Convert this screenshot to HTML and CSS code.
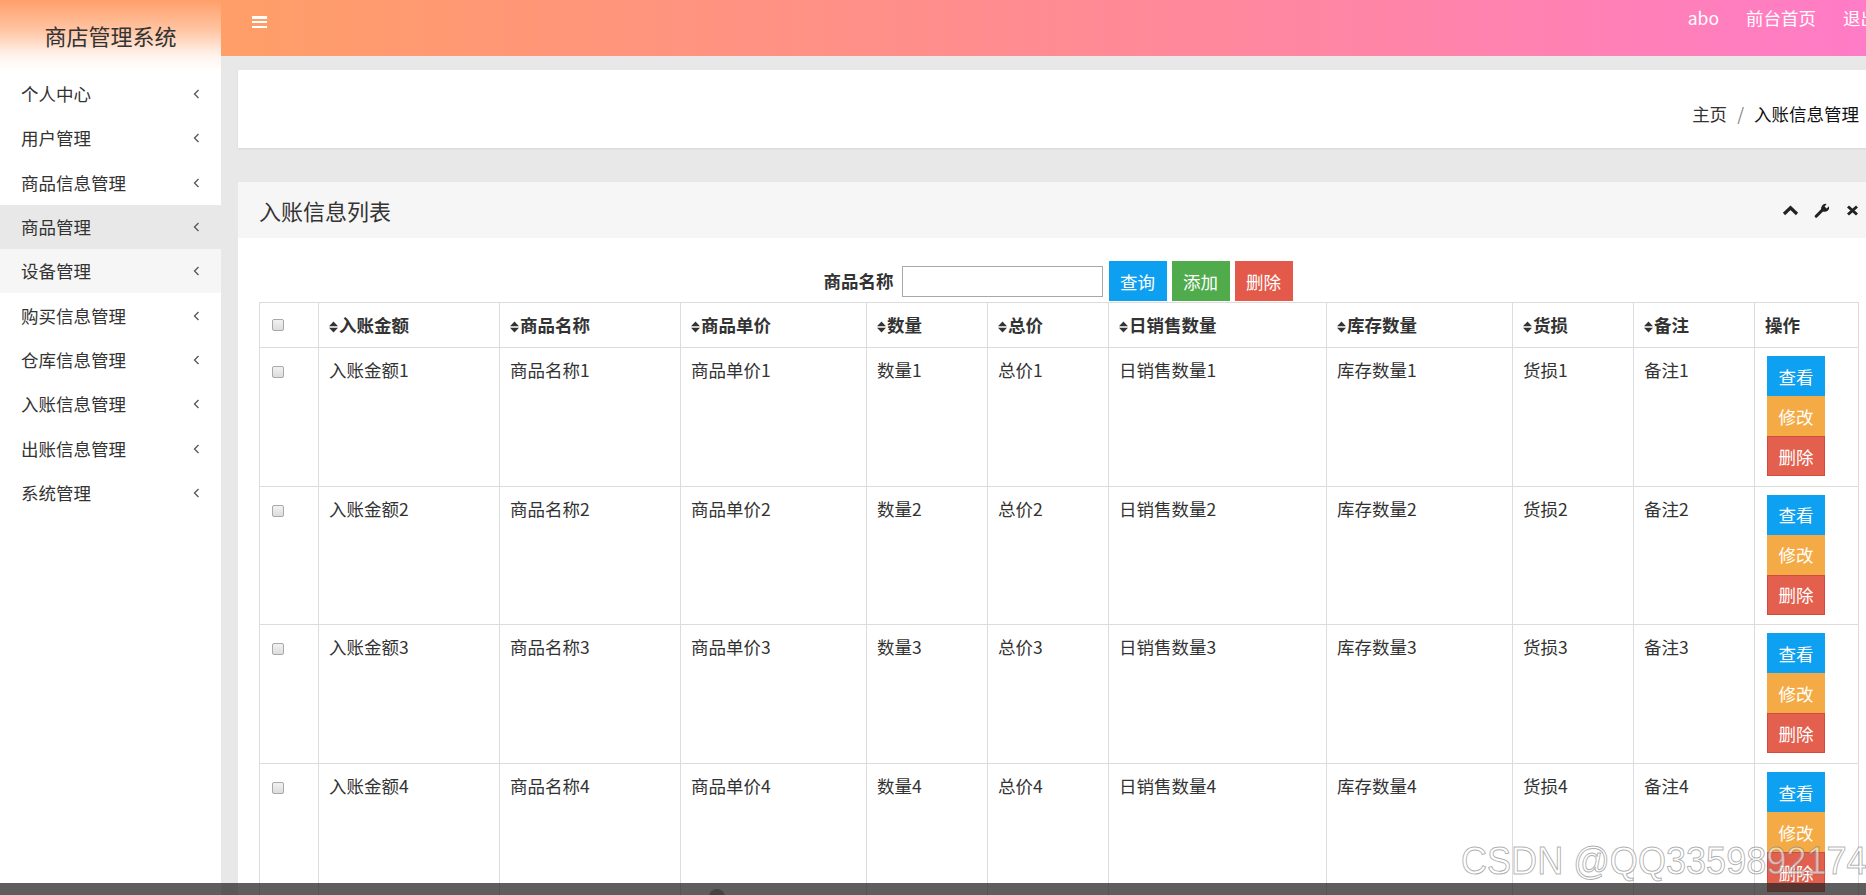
FILE: index.html
```html
<!DOCTYPE html>
<html lang="zh-CN">
<head>
<meta charset="utf-8">
<title>商店管理系统</title>
<link rel="stylesheet" href="styles.css">
</head>
<body>
<div class="app">
  <aside class="sidebar">
    <div class="logo">商店管理系统</div>
    <ul class="menu">
      <li class="menu-item"><span>个人中心</span><svg class="chev" width="7" height="10" viewBox="0 0 7 10"><polyline points="5.5,1 1.5,5 5.5,9"/></svg></li>
      <li class="menu-item"><span>用户管理</span><svg class="chev" width="7" height="10" viewBox="0 0 7 10"><polyline points="5.5,1 1.5,5 5.5,9"/></svg></li>
      <li class="menu-item"><span>商品信息管理</span><svg class="chev" width="7" height="10" viewBox="0 0 7 10"><polyline points="5.5,1 1.5,5 5.5,9"/></svg></li>
      <li class="menu-item is-active"><span>商品管理</span><svg class="chev" width="7" height="10" viewBox="0 0 7 10"><polyline points="5.5,1 1.5,5 5.5,9"/></svg></li>
      <li class="menu-item is-hover"><span>设备管理</span><svg class="chev" width="7" height="10" viewBox="0 0 7 10"><polyline points="5.5,1 1.5,5 5.5,9"/></svg></li>
      <li class="menu-item"><span>购买信息管理</span><svg class="chev" width="7" height="10" viewBox="0 0 7 10"><polyline points="5.5,1 1.5,5 5.5,9"/></svg></li>
      <li class="menu-item"><span>仓库信息管理</span><svg class="chev" width="7" height="10" viewBox="0 0 7 10"><polyline points="5.5,1 1.5,5 5.5,9"/></svg></li>
      <li class="menu-item"><span>入账信息管理</span><svg class="chev" width="7" height="10" viewBox="0 0 7 10"><polyline points="5.5,1 1.5,5 5.5,9"/></svg></li>
      <li class="menu-item"><span>出账信息管理</span><svg class="chev" width="7" height="10" viewBox="0 0 7 10"><polyline points="5.5,1 1.5,5 5.5,9"/></svg></li>
      <li class="menu-item"><span>系统管理</span><svg class="chev" width="7" height="10" viewBox="0 0 7 10"><polyline points="5.5,1 1.5,5 5.5,9"/></svg></li>
    </ul>
  </aside>

  <div class="main">
    <header class="topbar">
      <div class="hamburger"><span></span><span></span><span></span></div>
      <nav class="topnav">
        <span>abo</span>
        <span>前台首页</span>
        <span>退出</span>
      </nav>
    </header>

    <div class="content">
      <div class="crumb-card">
        <span class="crumb-home">主页</span><span class="crumb-sep">/</span><span class="crumb-cur">入账信息管理</span>
      </div>

      <section class="panel">
        <div class="panel-head">
          <h2 class="panel-title">入账信息列表</h2>
          <div class="panel-tools">
            <svg class="tool" width="17" height="11" viewBox="0 0 17 11"><polyline points="2,9 8.5,2.8 15,9" fill="none" stroke="#222" stroke-width="3.2"/></svg>
            <svg class="tool" width="17" height="15" viewBox="0 0 17 15"><path d="M2.2 13.2 L9 6.4" stroke="#222" stroke-width="3" stroke-linecap="round" fill="none"/><path d="M7.6 7.2 A4.4 4.4 0 0 1 12.6 1 L10.6 3.4 L12.6 5.4 L15 3.2 A4.4 4.4 0 0 1 9 8.4 Z" fill="#222"/></svg>
            <svg class="tool" width="13" height="11" viewBox="0 0 13 11"><path d="M2 1.5 L11 9.5 M11 1.5 L2 9.5" stroke="#222" stroke-width="3" fill="none"/></svg>
          </div>
        </div>

        <div class="panel-body">
          <div class="search">
            <label class="search-label">商品名称</label>
            <input class="search-input" type="text">
            <button class="btn btn-blue">查询</button>
            <button class="btn btn-green">添加</button>
            <button class="btn btn-red">删除</button>
          </div>

          <table class="grid">
            <colgroup>
              <col style="width:59px"><col style="width:181px"><col style="width:181px"><col style="width:186px">
              <col style="width:121px"><col style="width:121px"><col style="width:218px"><col style="width:186px">
              <col style="width:121px"><col style="width:121px"><col style="width:104px">
            </colgroup>
            <thead>
              <tr>
                <th class="cb-cell"><span class="cb"></span></th>
                <th><svg class="sort" width="9" height="12" viewBox="0 0 9 12"><path d="M4.5 0.5 L9 5.2 H0 Z M0 6.8 H9 L4.5 11.5 Z"/></svg>入账金额</th>
                <th><svg class="sort" width="9" height="12" viewBox="0 0 9 12"><path d="M4.5 0.5 L9 5.2 H0 Z M0 6.8 H9 L4.5 11.5 Z"/></svg>商品名称</th>
                <th><svg class="sort" width="9" height="12" viewBox="0 0 9 12"><path d="M4.5 0.5 L9 5.2 H0 Z M0 6.8 H9 L4.5 11.5 Z"/></svg>商品单价</th>
                <th><svg class="sort" width="9" height="12" viewBox="0 0 9 12"><path d="M4.5 0.5 L9 5.2 H0 Z M0 6.8 H9 L4.5 11.5 Z"/></svg>数量</th>
                <th><svg class="sort" width="9" height="12" viewBox="0 0 9 12"><path d="M4.5 0.5 L9 5.2 H0 Z M0 6.8 H9 L4.5 11.5 Z"/></svg>总价</th>
                <th><svg class="sort" width="9" height="12" viewBox="0 0 9 12"><path d="M4.5 0.5 L9 5.2 H0 Z M0 6.8 H9 L4.5 11.5 Z"/></svg>日销售数量</th>
                <th><svg class="sort" width="9" height="12" viewBox="0 0 9 12"><path d="M4.5 0.5 L9 5.2 H0 Z M0 6.8 H9 L4.5 11.5 Z"/></svg>库存数量</th>
                <th><svg class="sort" width="9" height="12" viewBox="0 0 9 12"><path d="M4.5 0.5 L9 5.2 H0 Z M0 6.8 H9 L4.5 11.5 Z"/></svg>货损</th>
                <th><svg class="sort" width="9" height="12" viewBox="0 0 9 12"><path d="M4.5 0.5 L9 5.2 H0 Z M0 6.8 H9 L4.5 11.5 Z"/></svg>备注</th>
                <th>操作</th>
              </tr>
            </thead>
            <tbody>
              <tr>
                <td class="cb-cell"><span class="cb"></span></td>
                <td>入账金额1</td><td>商品名称1</td><td>商品单价1</td><td>数量1</td><td>总价1</td><td>日销售数量1</td><td>库存数量1</td><td>货损1</td><td>备注1</td>
                <td class="ops"><button class="op op-view">查看</button><button class="op op-edit">修改</button><button class="op op-del">删除</button></td>
              </tr>
              <tr>
                <td class="cb-cell"><span class="cb"></span></td>
                <td>入账金额2</td><td>商品名称2</td><td>商品单价2</td><td>数量2</td><td>总价2</td><td>日销售数量2</td><td>库存数量2</td><td>货损2</td><td>备注2</td>
                <td class="ops"><button class="op op-view">查看</button><button class="op op-edit">修改</button><button class="op op-del">删除</button></td>
              </tr>
              <tr>
                <td class="cb-cell"><span class="cb"></span></td>
                <td>入账金额3</td><td>商品名称3</td><td>商品单价3</td><td>数量3</td><td>总价3</td><td>日销售数量3</td><td>库存数量3</td><td>货损3</td><td>备注3</td>
                <td class="ops"><button class="op op-view">查看</button><button class="op op-edit">修改</button><button class="op op-del">删除</button></td>
              </tr>
              <tr>
                <td class="cb-cell"><span class="cb"></span></td>
                <td>入账金额4</td><td>商品名称4</td><td>商品单价4</td><td>数量4</td><td>总价4</td><td>日销售数量4</td><td>库存数量4</td><td>货损4</td><td>备注4</td>
                <td class="ops"><button class="op op-view">查看</button><button class="op op-edit">修改</button><button class="op op-del">删除</button></td>
              </tr>
            </tbody>
          </table>
        </div>
      </section>
    </div>
  </div>
</div>

<div class="watermark">CSDN @QQ3359892174</div>
<div class="player-bar"><span class="player-knob"></span></div>
</body>
</html>
```

FILE: styles.css
```css
* {
  box-sizing: border-box;
  margin: 0;
  padding: 0;
}

html, body {
  width: 1866px;
  height: 895px;
  overflow: hidden;
}

body {
  position: relative;
  font-family: "Noto Sans CJK SC", "Noto Sans", sans-serif;
  font-size: 17.5px;
  line-height: 26px;
  color: #333;
  background: #e8e8e8;
}

.app {
  display: flex;
  width: 1890px;
  height: 895px;
  overflow: hidden;
}

/* ---------- sidebar ---------- */
.sidebar {
  flex: none;
  width: 221px;
  height: 895px;
  background: #fff;
}

.logo {
  height: 71px;
  display: flex;
  align-items: center;
  justify-content: center;
  padding-bottom: 2px;
  font-size: 22px;
  color: #333;
  background: linear-gradient(to bottom, #ff9f6a 0%, #ffc4a2 42%, #fff3ec 78%, #ffffff 100%);
}

.menu {
  list-style: none;
  padding-top: 1px;
}

.menu-item {
  height: 44.3px;
  display: flex;
  align-items: center;
  justify-content: space-between;
  padding: 0 21px 0 21px;
  color: #333;
}

.menu-item.is-active {
  background: #e8e8e8;
}

.menu-item.is-hover {
  background: #f6f6f6;
}

.chev polyline {
  fill: none;
  stroke: #555;
  stroke-width: 1.3;
}

/* ---------- main ---------- */
.main {
  flex: 1;
  min-height: 0;
  display: flex;
  flex-direction: column;
  overflow: hidden;
}

.topbar {
  flex: none;
  height: 56px;
  display: flex;
  align-items: flex-start;
  padding: 0 12px 0 31px;
  background: linear-gradient(to right, #ff9e67 0%, #ff8b92 50%, #ff7bc8 100%);
}

.hamburger {
  margin-top: 16px;
  width: 15px;
  display: flex;
  flex-direction: column;
  gap: 2.3px;
}

.hamburger span {
  display: block;
  height: 2.5px;
  background: #fff;
}

.topnav {
  margin-left: auto;
  display: flex;
  gap: 27px;
  padding-top: 5px;
  color: #fff;
  line-height: 26px;
}

.content {
  flex: 1;
  min-height: 0;
  overflow: hidden;
  padding: 14px 12px 0 17px;
  background: #e8e8e8;
}

.crumb-card {
  height: 78px;
  display: flex;
  justify-content: flex-end;
  align-items: flex-start;
  padding: 31px 19px 0 0;
  background: #fff;
  box-shadow: 0 1px 2px rgba(0, 0, 0, 0.08);
}

.crumb-sep {
  padding: 0 10px;
  color: #888;
}

.crumb-cur {
  color: #111;
}

/* ---------- panel ---------- */
.panel {
  margin-top: 34px;
  background: #fff;
}

.panel-head {
  height: 56px;
  display: flex;
  align-items: center;
  padding: 0 19px 0 21px;
  background: #f6f6f6;
}

.panel-title {
  font-size: 22px;
  font-weight: normal;
  color: #333;
  line-height: 30px;
}

.panel-tools {
  margin-left: auto;
  display: flex;
  align-items: center;
  gap: 15px;
}

.panel-body {
  padding: 0 21px;
}

.search {
  display: flex;
  justify-content: center;
  align-items: center;
  height: 40px;
  margin: 23px 0 1px;
}

.search-label {
  font-weight: bold;
  margin-right: 8px;
  color: #333;
}

.search-input {
  width: 201px;
  height: 31px;
  border: 1px solid #a8a8a8;
  outline: none;
  background: #fff;
}

.btn {
  width: 58px;
  height: 40px;
  border: none;
  color: #fff;
  font-family: inherit;
  font-size: 17.5px;
  margin-left: 5px;
}

.search-input + .btn {
  margin-left: 6px;
}

.btn-blue { background: #0ea0f0; }
.btn-green { background: #4fab4c; }
.btn-red { background: #e35a4b; }

/* ---------- table ---------- */
.grid {
  width: 1599px;
  table-layout: fixed;
  border-collapse: collapse;
}

.grid th,
.grid td {
  border: 1px solid #dcdcdc;
  text-align: left;
  padding: 0 10px;
}

.grid thead tr {
  height: 45px;
}

.grid th {
  font-weight: bold;
  vertical-align: middle;
  color: #333;
  white-space: nowrap;
}

.grid tbody tr {
  height: 138.7px;
}

.grid td {
  vertical-align: top;
  padding: 8px 10px 8px;
  color: #333;
}

.grid td:not(.ops) {
  padding-top: 9px;
}

.sort {
  fill: #333;
  margin-right: 1px;
  vertical-align: -1px;
}

.cb-cell {
  padding-left: 12px !important;
}

.cb {
  display: inline-block;
  width: 12px;
  height: 12px;
  border: 1px solid #a9a9a9;
  border-radius: 2px;
  background: linear-gradient(#f2f2f2, #dcdcdc);
  vertical-align: middle;
}

.grid th .cb {
  vertical-align: 1px;
}

.grid td .cb {
  vertical-align: -1px;
}

.ops {
  padding-left: 12px !important;
}

.op {
  display: block;
  width: 58px;
  height: 40px;
  border: none;
  color: #fff;
  font-family: inherit;
  font-size: 17.5px;
}

.op-view { background: #0ea1f2; }
.op-edit { background: #f5ab45; }
.op-del { background: #e3604f; box-shadow: inset 0 0 0 1px #d24b3c; }

/* ---------- overlays ---------- */
.watermark {
  position: absolute;
  left: 1461px;
  top: 838px;
  font-family: "Liberation Sans", Arial, sans-serif;
  font-size: 39px;
  line-height: 46px;
  white-space: nowrap;
  color: rgba(255, 255, 255, 0.55);
  -webkit-text-stroke: 1px rgba(110, 110, 110, 0.55);
  transform: scaleX(0.925);
  transform-origin: left top;
}

.player-bar {
  position: absolute;
  left: 0;
  bottom: 0;
  width: 1866px;
  height: 12px;
  background: rgba(40, 40, 40, 0.75);
}

.player-knob {
  position: absolute;
  left: 709px;
  top: 6px;
  width: 16px;
  height: 16px;
  border-radius: 50%;
  background: #444;
}
```
